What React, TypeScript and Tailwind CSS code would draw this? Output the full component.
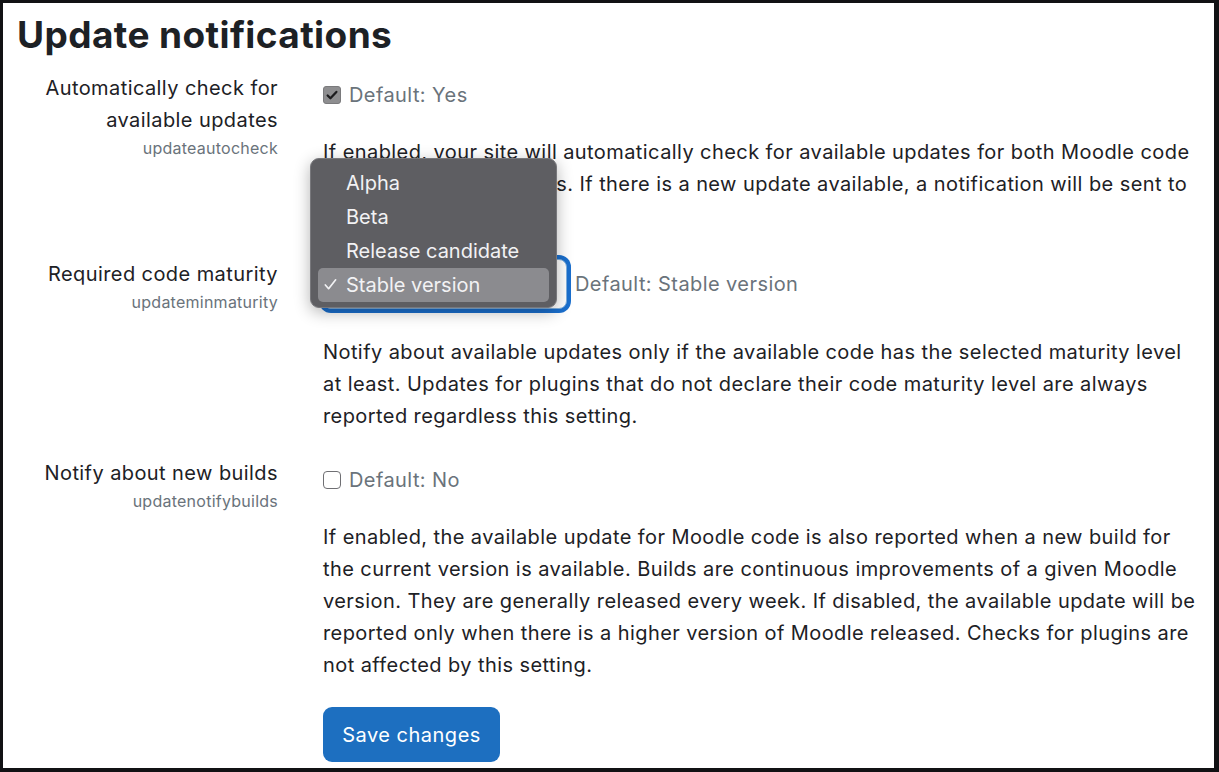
import React from 'react';

const Check = () => (
  <svg viewBox="0 0 16 16" className="w-[14px] h-[14px]" fill="none">
    <path d="M3 8.5l3.2 3.2L13 4.5" stroke="currentColor" strokeWidth="2.6" strokeLinecap="round" strokeLinejoin="round" />
  </svg>
);

const options = ['Alpha', 'Beta', 'Release candidate', 'Stable version'];

export default function App() {
  return (
    <div className="w-[1219px] h-[772px] bg-white border-t-[3px] border-l-[3px] border-r-[5px] border-b-[4px] border-[#111214] overflow-hidden font-[Inter,sans-serif] text-[#1d2125] tracking-[0.42px]">
      <h1 className="pl-[14px] pt-[10px] text-[37px] leading-[44px] font-bold tracking-[0.4px] text-[#1d2125]">
        Update notifications
      </h1>

      {/* updateautocheck */}
      <div className="mt-[15px] grid grid-cols-[275px_1fr] gap-x-[45px]">
        <div className="text-right">
          <div className="text-[20px] leading-[32px]">Automatically check for available updates</div>
          <div className="text-[16px] leading-[24px] tracking-[0.25px] text-[#6a737b]">updateautocheck</div>
        </div>
        <div className="pt-[7px] pr-[16px]">
          <div className="flex items-center h-[32px] gap-[8px]">
            <span className="w-[18px] h-[18px] rounded-[3px] bg-[#8e8e90] border border-[#7a7a7c] flex items-center justify-center text-[#1c1c1e]">
              <Check />
            </span>
            <span className="text-[20px] text-[#6a737b]">Default: Yes</span>
          </div>
          <p className="mt-[25px] text-[20px] leading-[32px]">
            If enabled, your site will automatically check for available updates for both Moodle code and all additional plugins. If there is a new update available, a notification will be sent to site admins.
          </p>
        </div>
      </div>

      {/* updateminmaturity */}
      <div className="mt-[26px] grid grid-cols-[275px_1fr] gap-x-[45px]">
        <div className="text-right">
          <div className="text-[20px] leading-[32px]">Required code maturity</div>
          <div className="text-[16px] leading-[24px] tracking-[0.25px] text-[#6a737b]">updateminmaturity</div>
        </div>
        <div className="pr-[16px]">
          <div className="flex items-center gap-[8px] mt-[1px]">
            <div className="relative">
              <div className="w-[244px] h-[50px] rounded-[8px] border border-[#7fb0df] shadow-[0_0_0_4px_#1a6fce] bg-white" />
              <div className="absolute left-[-13px] top-[-101px] w-[247px] rounded-[9px] bg-[#5e5e62] border border-[#78787c] shadow-[0_4px_16px_rgba(0,0,0,0.3)] px-[7px] pt-[7px] pb-[5px] text-[20px] tracking-normal text-[#f2f2f4]">
                {options.map((o) => (
                  <div
                    key={o}
                    className={`relative h-[34px] flex items-center pl-[28px] rounded-[5px] ${
                      o === 'Stable version' ? 'bg-[#8b8b8f]' : ''
                    }`}
                  >
                    {o === 'Stable version' && (
                      <span className="absolute left-[5px] top-[9px] text-[#f2f2f4]">
                        <svg viewBox="0 0 16 16" className="w-[15px] h-[15px]" fill="none">
                          <path d="M2.5 8.5l3.5 4L13.5 3" stroke="currentColor" strokeWidth="1.8" strokeLinecap="round" strokeLinejoin="round" />
                        </svg>
                      </span>
                    )}
                    {o}
                  </div>
                ))}
              </div>
            </div>
            <span className="text-[20px] text-[#6a737b]">Default: Stable version</span>
          </div>
          <p className="mt-[27px] text-[20px] leading-[32px]">
            Notify about available updates only if the available code has the selected maturity level at least. Updates for plugins that do not declare their code maturity level are always reported regardless this setting.
          </p>
        </div>
      </div>

      {/* updatenotifybuilds */}
      <div className="mt-[25px] grid grid-cols-[275px_1fr] gap-x-[45px]">
        <div className="text-right">
          <div className="text-[20px] leading-[32px]">Notify about new builds</div>
          <div className="text-[16px] leading-[24px] tracking-[0.25px] text-[#6a737b]">updatenotifybuilds</div>
        </div>
        <div className="pt-[7px] pr-[16px]">
          <div className="flex items-center h-[32px] gap-[8px]">
            <span className="w-[18px] h-[18px] rounded-[4px] bg-white border border-[#6f6f73]" />
            <span className="text-[20px] text-[#6a737b]">Default: No</span>
          </div>
          <p className="mt-[25px] text-[20px] leading-[32px]">
            If enabled, the available update for Moodle code is also reported when a new build for the current version is available. Builds are continuous improvements of a given Moodle version. They are generally released every week. If disabled, the available update will be reported only when there is a higher version of Moodle released. Checks for plugins are not affected by this setting.
          </p>
          <button
            type="button"
            className="mt-[26px] w-[177px] h-[55px] rounded-[9px] bg-[#1d6fc0] text-white text-[20px] tracking-[0.5px]"
          >
            Save changes
          </button>
        </div>
      </div>
    </div>
  );
}
